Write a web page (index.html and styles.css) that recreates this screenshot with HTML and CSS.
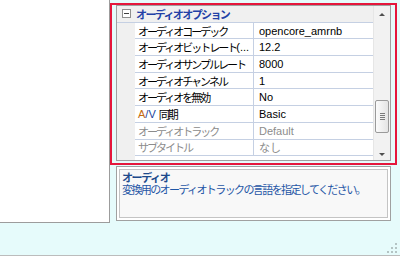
FILE: index.html
```html
<!DOCTYPE html>
<html lang="ja">
<head>
  <meta charset="UTF-8" />
  <title>オーディオオプション</title>
  <link rel="stylesheet" href="styles.css">
</head>
<body>
  <div class="window">
    <div class="main">
      <div class="left-pane"></div>
      <div class="right-pane">
        <div class="grid">
          <div class="rows">
            <div class="category">
              <span class="gutter"><span class="toggle"></span></span>
              <span class="cat-label">オーディオオプション</span>
            </div>
            <div class="row"><span class="gutter"></span><span class="name">オーディオコーデック</span><span class="value">opencore_amrnb</span></div>
            <div class="row"><span class="gutter"></span><span class="name">オーディオビットレート<span class="lat">(...</span></span><span class="value">12.2</span></div>
            <div class="row"><span class="gutter"></span><span class="name">オーディオサンプルレート</span><span class="value">8000</span></div>
            <div class="row"><span class="gutter"></span><span class="name">オーディオチャンネル</span><span class="value">1</span></div>
            <div class="row"><span class="gutter"></span><span class="name">オーディオを無効</span><span class="value">No</span></div>
            <div class="row"><span class="gutter"></span><span class="name"><span class="av"><b>A</b>/V</span> 同期</span><span class="value">Basic</span></div>
            <div class="row disabled"><span class="gutter"></span><span class="name">オーディオトラック</span><span class="value">Default</span></div>
            <div class="row disabled"><span class="gutter"></span><span class="name">サブタイトル</span><span class="value">なし</span></div>
          </div>
          <div class="scrollbar">
            <span class="arrow"><span class="tri-up"></span></span>
            <div class="track">
              <div class="thumb"><span class="grip"></span></div>
            </div>
            <span class="arrow"><span class="tri-down"></span></span>
          </div>
        </div>
        <div class="desc">
          <div class="desc-inner">
            <div class="desc-title">オーディオ</div>
            <div class="desc-text">変換用のオーディオトラックの言語を指定してください。</div>
          </div>
        </div>
      </div>
    </div>
    <div class="status">
      <svg class="size-grip" width="11" height="11" viewBox="0 0 11 11">
        <g fill="#b4c4c4">
          <rect x="8" y="0" width="2" height="2"/>
          <rect x="4" y="4" width="2" height="2"/>
          <rect x="8" y="4" width="2" height="2"/>
          <rect x="0" y="8" width="2" height="2"/>
          <rect x="4" y="8" width="2" height="2"/>
          <rect x="8" y="8" width="2" height="2"/>
        </g>
      </svg>
    </div>
    <div class="highlight"></div>
  </div>
</body>
</html>
```

FILE: styles.css
```css
body {
  margin: 0;
  background: #e6fbfb;
  font-family: "Liberation Sans", "Noto Sans CJK JP", sans-serif;
  font-size: 11px;
  color: #000;
}
.window {
  position: relative;
  width: 400px;
  height: 256px;
  display: flex;
  flex-direction: column;
}
.main {
  display: flex;
  height: 223px;
}
.left-pane {
  width: 110px;
  box-sizing: border-box;
  background: #fff;
  border-right: 1px solid #9c9c9c;
  border-bottom: 1px solid #9c9c9c;
}
.right-pane {
  margin-left: 6px;
  width: 275px;
  padding-top: 5px;
  display: flex;
  flex-direction: column;
}

/* property grid */
.grid {
  height: 156px;
  box-sizing: border-box;
  border: 1px solid #a0a0a0;
  display: flex;
  background: #fff;
}
.rows {
  flex: 1;
  display: flex;
  flex-direction: column;
  background: linear-gradient(to right, #f0f0f0 18px, #fff 18px);
}
.category {
  height: 16.7px;
  display: flex;
  align-items: center;
  background: #f0f0f0;
  border-bottom: 1px solid #c5d0e3;
  box-sizing: border-box;
}
.gutter {
  width: 18px;
  flex: none;
  align-self: stretch;
  display: flex;
  align-items: center;
  background: #f0f0f0;
}
.toggle {
  position: relative;
  width: 7px;
  height: 7px;
  margin-left: 5px;
  border: 1px solid #8f8f8f;
  background: #fff;
}
.toggle::after {
  content: "";
  position: absolute;
  left: 1px;
  top: 3px;
  width: 5px;
  height: 1px;
  background: #404040;
}
.cat-label {
  padding-left: 1px;
  font-weight: bold;
  color: #2240a6;
  letter-spacing: -1.6px;
}
.row {
  height: 16.7px;
  display: flex;
}
.name,
.value {
  box-sizing: border-box;
  display: flex;
  align-items: center;
  border-bottom: 1px solid #c5d0e3;
  white-space: nowrap;
  overflow: hidden;
}
.name {
  width: 119px;
  padding-left: 3px;
  border-right: 1px solid #c5d0e3;
  letter-spacing: -2px;
}
.name .lat {
  letter-spacing: 0;
}
.av {
  letter-spacing: 0;
  color: #1a3f9a;
  margin-right: 3px;
}
.av b {
  font-weight: normal;
  color: #c46a10;
}
.value {
  flex: 1;
  padding-left: 5px;
}
.row.disabled .name,
.row.disabled .value {
  color: #8c8c8c;
}

/* scrollbar */
.scrollbar {
  width: 17px;
  display: flex;
  flex-direction: column;
  background: #f2f2f2;
  border-left: 1px solid #e6e6e6;
  box-sizing: border-box;
}
.arrow {
  height: 17px;
  display: flex;
  align-items: center;
  justify-content: center;
}
.tri-up,
.tri-down {
  width: 0;
  height: 0;
  border-left: 3px solid transparent;
  border-right: 3px solid transparent;
}
.tri-up { border-bottom: 3px solid #505050; }
.tri-down { border-top: 3px solid #505050; margin-top: 5px; }
.track {
  flex: 1;
  padding-top: 77px;
}
.thumb {
  height: 33px;
  margin: 0 1px;
  box-sizing: border-box;
  border: 1px solid #9a9a9a;
  border-radius: 2px;
  background: linear-gradient(to right, #fbfbfb, #e4e4e4);
  display: flex;
  align-items: center;
  justify-content: center;
}
.grip {
  width: 5px;
  height: 7px;
  background: repeating-linear-gradient(to bottom, #7a7a7a 0 1px, transparent 1px 2px);
}

/* description */
.desc {
  margin-top: 5px;
  height: 55px;
  box-sizing: border-box;
  border: 1px solid #a0a0a0;
  padding: 2px;
  background: #fff;
}
.desc-inner {
  height: 100%;
  box-sizing: border-box;
  border: 1px solid #c4c4c4;
  background: #f8f8f8;
  padding: 2px 0 0 2px;
  line-height: 12px;
}
.desc-title {
  font-weight: bold;
  color: #1d4a8c;
  letter-spacing: -1.4px;
}
.desc-text {
  color: #1f56a6;
  letter-spacing: -1.6px;
}

/* bottom strip */
.status {
  flex: 1;
  box-sizing: border-box;
  border-bottom: 1px solid #bcbcbc;
  display: flex;
  justify-content: flex-end;
  align-items: flex-end;
  padding: 0 2px 1px 0;
}

.highlight {
  position: absolute;
  left: 110px;
  top: 3px;
  width: 287px;
  height: 162px;
  box-sizing: border-box;
  border: 2px solid #e5173c;
}
```
